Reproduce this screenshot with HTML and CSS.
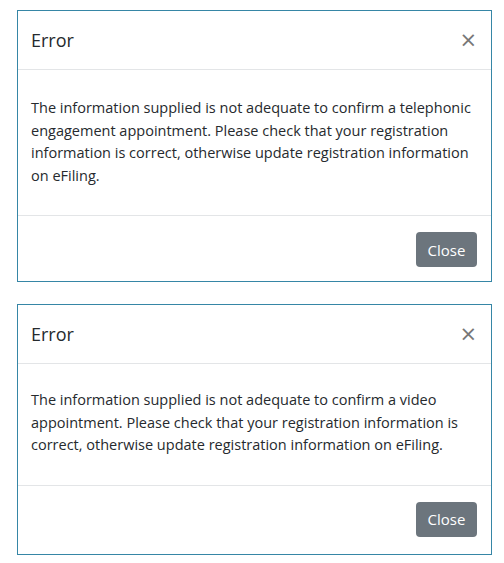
FILE: index.html
```html
<!DOCTYPE html>
<html lang="en">
<head>
    <meta charset="UTF-8">
    <meta name="viewport" content="width=device-width, initial-scale=1.0">
    <title>Error dialogs</title>
    <link rel="stylesheet" href="styles.css">
</head>
<body>
    <div class="stack">
        <div class="dialog">
            <div class="dialog-header">
                <h5 class="dialog-title">Error</h5>
                <button class="dialog-x" type="button">&times;</button>
            </div>
            <div class="dialog-body">
                The information supplied is not adequate to confirm a telephonic engagement appointment. Please check that your registration information is correct, otherwise update registration information on eFiling.
            </div>
            <div class="dialog-footer">
                <button class="btn-close" type="button">Close</button>
            </div>
        </div>

        <div class="dialog dialog-video">
            <div class="dialog-header">
                <h5 class="dialog-title">Error</h5>
                <button class="dialog-x" type="button">&times;</button>
            </div>
            <div class="dialog-body">
                The information supplied is not adequate to confirm a video appointment. Please check that your registration information is correct, otherwise update registration information on eFiling.
            </div>
            <div class="dialog-footer">
                <button class="btn-close" type="button">Close</button>
            </div>
        </div>
    </div>
</body>
</html>
```

FILE: styles.css
```css
body {
    margin: 0;
    padding: 10px 0 0 17px;
    background: #fff;
    font-family: "Open Sans", "Noto Sans", sans-serif;
    color: #262a2e;
}
.stack {
    display: flex;
    flex-direction: column;
    gap: 22px;
    width: 475px;
}
.dialog {
    border: 1px solid #3686a6;
    background: #fff;
}
.dialog-header {
    display: flex;
    align-items: center;
    justify-content: space-between;
    height: 58px;
    padding: 0 14px 0 13px;
    border-bottom: 1px solid #e3e5e7;
}
.dialog-title {
    margin: 0;
    font-size: 18px;
    font-weight: 400;
}
.dialog-x {
    border: 0;
    background: none;
    padding: 0;
    font-family: "DejaVu Sans", sans-serif;
    font-size: 21px;
    line-height: 1;
    color: #777;
    cursor: pointer;
}
.dialog-body {
    padding: 27px 14px 28px 13px;
    font-size: 14.5px;
    line-height: 22.5px;
}
.dialog-footer {
    display: flex;
    justify-content: flex-end;
    padding: 16px 14px 14px;
    border-top: 1px solid #e3e5e7;
}
.dialog-video .dialog-body {
    padding-top: 25px;
}
.dialog-video .dialog-footer {
    padding-bottom: 17px;
}
.btn-close {
    border: 0;
    border-radius: 4px;
    background: #6c757d;
    color: #fff;
    font-family: inherit;
    font-size: 15px;
    width: 61px;
    height: 35px;
    cursor: pointer;
}
```
